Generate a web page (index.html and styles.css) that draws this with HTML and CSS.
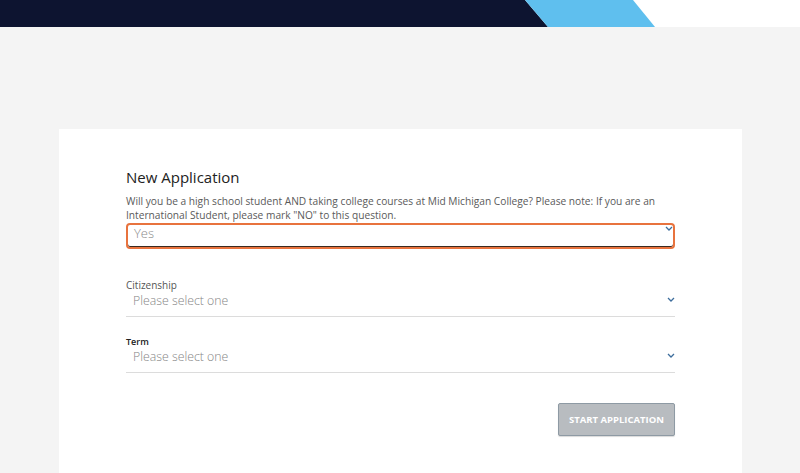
FILE: index.html
```html
<!DOCTYPE html>
<html>
<head>
<meta charset="utf-8">
<link rel="stylesheet" href="styles.css">
</head>
<body>
<header class="topbar">
  <svg class="topbar-art" width="800" height="27" viewBox="0 0 800 27">
    <rect x="0" y="0" width="800" height="27" fill="#ffffff"/>
    <polygon points="0,0 525,0 548,27 0,27" fill="#0d1430"/>
    <polygon points="525,0 633,0 655,27 548,27" fill="#5fbfee"/>
  </svg>
</header>
<main class="page">
  <section class="card">
    <h1 class="title">New Application</h1>
    <p class="question">Will you be a high school student AND taking college courses at Mid Michigan College? Please note: If you are an International Student, please mark "NO" to this question.</p>
    <div class="select select-focus">
      <span class="value">Yes</span>
      <svg class="chev chev-top" width="8" height="5" viewBox="0 0 8 5"><polyline points="1,1 4,4 7,1" fill="none" stroke="#3d6d9c" stroke-width="1.3"/></svg>
    </div>

    <div class="field field-first">
      <div class="label">Citizenship</div>
      <div class="line-select">
        <span class="placeholder">Please select one</span>
        <svg class="chev" width="8" height="5" viewBox="0 0 8 5"><polyline points="1,1 4,4 7,1" fill="none" stroke="#3d6d9c" stroke-width="1.3"/></svg>
      </div>
    </div>

    <div class="field">
      <div class="label label-bold">Term</div>
      <div class="line-select">
        <span class="placeholder">Please select one</span>
        <svg class="chev" width="8" height="5" viewBox="0 0 8 5"><polyline points="1,1 4,4 7,1" fill="none" stroke="#3d6d9c" stroke-width="1.3"/></svg>
      </div>
    </div>

    <div class="actions">
      <button class="btn" type="button">START APPLICATION</button>
    </div>
  </section>
</main>
</body>
</html>
```
FILE: styles.css
```css
* { box-sizing: border-box; }
html, body { margin: 0; padding: 0; }
body {
  width: 800px;
  height: 473px;
  overflow: hidden;
  background: #f4f4f4;
  font-family: "Open Sans", "Liberation Sans", sans-serif;
  color: #333;
}
.topbar { height: 27px; display: block; }
.topbar-art { display: block; }
.page {
  padding: 102px 58px 0 59px;
}
.card {
  background: #ffffff;
  width: 683px;
  height: 360px;
  padding: 38px 67px 0 67px;
}
.title {
  margin: 0;
  font-size: 15px;
  line-height: 20px;
  font-weight: 400;
  color: #222;
}
.question {
  margin: 7px 0 0 0;
  font-size: 10.2px;
  line-height: 14px;
  color: #5a5a5a;
}
.select {
  margin-top: 1px;
  height: 26px;
  display: flex;
  align-items: center;
  justify-content: space-between;
  position: relative;
  padding: 0 6px;
}
.select-focus {
  border: 2px solid #e8733e;
  border-radius: 4px;
  box-shadow: inset 0 -1px 0 #3a2a20;
}
.value {
  font-size: 13px;
  font-weight: 300;
  color: #8a8a8a;
  line-height: 18px;
  margin-top: -7px;
}
.chev { display: block; }
.chev-top {
  position: absolute;
  right: 0;
  top: 1px;
}
.field { margin-top: 18px; }
.field-first { margin-top: 30px; }
.label {
  font-size: 10px;
  line-height: 13px;
  color: #555;
}
.label-bold {
  font-size: 9px;
  font-weight: 600;
  color: #222;
}
.line-select {
  display: flex;
  align-items: center;
  justify-content: space-between;
  border-bottom: 1px solid #dcdcdc;
  padding: 0 0 6px 7px;
}
.placeholder {
  font-size: 12.3px;
  font-weight: 300;
  line-height: 18px;
  color: #858585;
}
.line-select .chev { margin-top: -4px; }
.actions {
  display: flex;
  justify-content: flex-end;
  margin-top: 30px;
}
.btn {
  width: 117px;
  height: 33px;
  background: #b8bcc0;
  border: 1px solid #8e9aa4;
  border-radius: 2px;
  color: #ffffff;
  font-family: "Open Sans", "Liberation Sans", sans-serif;
  font-weight: 700;
  font-size: 9.5px;
  letter-spacing: 0;
  padding: 0;
  box-shadow: 0 1px 1px rgba(0,0,0,0.15);
}
```
